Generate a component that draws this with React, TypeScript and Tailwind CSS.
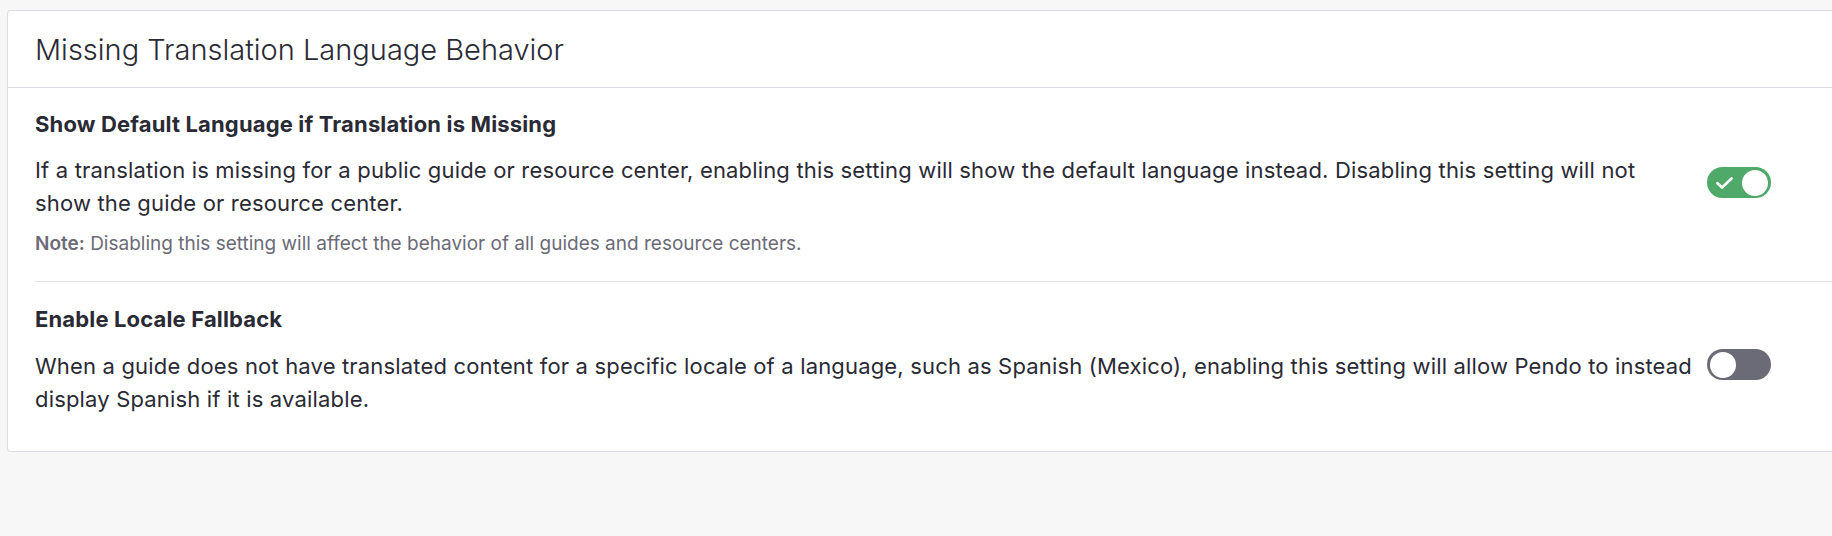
import React, { useState } from 'react';

interface Setting {
  id: string;
  title: string;
  description: string;
  note?: string;
  enabled: boolean;
}

const initialSettings: Setting[] = [
  {
    id: 'default-language',
    title: 'Show Default Language if Translation is Missing',
    description:
      'If a translation is missing for a public guide or resource center, enabling this setting will show the default language instead. Disabling this setting will not show the guide or resource center.',
    note: 'Disabling this setting will affect the behavior of all guides and resource centers.',
    enabled: true,
  },
  {
    id: 'locale-fallback',
    title: 'Enable Locale Fallback',
    description:
      'When a guide does not have translated content for a specific locale of a language, such as Spanish (Mexico), enabling this setting will allow Pendo to instead display Spanish if it is available.',
    enabled: false,
  },
];

function Toggle({ on, onChange }: { on: boolean; onChange: () => void }) {
  return (
    <button
      type="button"
      role="switch"
      aria-checked={on}
      onClick={onChange}
      className={`relative flex h-[31px] w-[64px] shrink-0 items-center rounded-full px-[3px] ${
        on ? 'justify-end bg-[#4fa968]' : 'justify-start bg-[#6b6b77]'
      }`}
    >
      {on && (
        <svg
          className="absolute left-[9px] top-[10px]"
          width="17"
          height="12"
          viewBox="0 0 17 12"
          fill="none"
        >
          <path d="M1.5 6.2l4.6 4.3L15.5 1.5" stroke="white" strokeWidth="2.6" strokeLinecap="round" strokeLinejoin="round" />
        </svg>
      )}
      <span className="block h-[26px] w-[26px] rounded-full bg-white" />
    </button>
  );
}

export default function App() {
  const [settings, setSettings] = useState<Setting[]>(initialSettings);

  const toggle = (id: string) =>
    setSettings(prev => prev.map(s => (s.id === id ? { ...s, enabled: !s.enabled } : s)));

  return (
    <div className="min-h-[536px] overflow-hidden bg-[#f7f7f7] pt-[10px] font-['Inter',sans-serif] text-[#2a2a35]">
      <div className="ml-[7px] rounded-l-[4px] border border-r-0 border-[#dddbe5] bg-white">
        {/* Card header */}
        <div className="flex h-[77px] items-center border-b border-[#dddbe5] pl-[27px]">
          <h2 className="text-[29px] font-light leading-none">Missing Translation Language Behavior</h2>
        </div>

        {/* Settings list */}
        <div className="pl-[27px]">
          {settings.map((s, i) => (
            <div
              key={s.id}
              className={i === 0 ? 'pt-[22px] pb-[25px]' : 'border-t border-[#e3e2ea] pt-[23px] pb-[35px]'}
            >
              <h3 className="text-[22px] font-bold leading-[28px] tracking-[0.15px]">{s.title}</h3>
              <div className={`flex items-start ${i === 0 ? 'mt-[16px]' : 'mt-[17px]'}`}>
                <div className="w-[1660px] shrink-0">
                  <p className="text-[22px] leading-[33px] tracking-[0.17px]">{s.description}</p>
                  {s.note && (
                    <p className="mt-[12px] text-[19px] leading-[24px] text-[#6b6b77]">
                      <span className="font-semibold">Note:</span> {s.note}
                    </p>
                  )}
                </div>
                <div className={`ml-[12px] ${i === 0 ? 'mt-[13px]' : '-mt-[1px]'}`}>
                  <Toggle on={s.enabled} onChange={() => toggle(s.id)} />
                </div>
              </div>
            </div>
          ))}
        </div>
      </div>
    </div>
  );
}
